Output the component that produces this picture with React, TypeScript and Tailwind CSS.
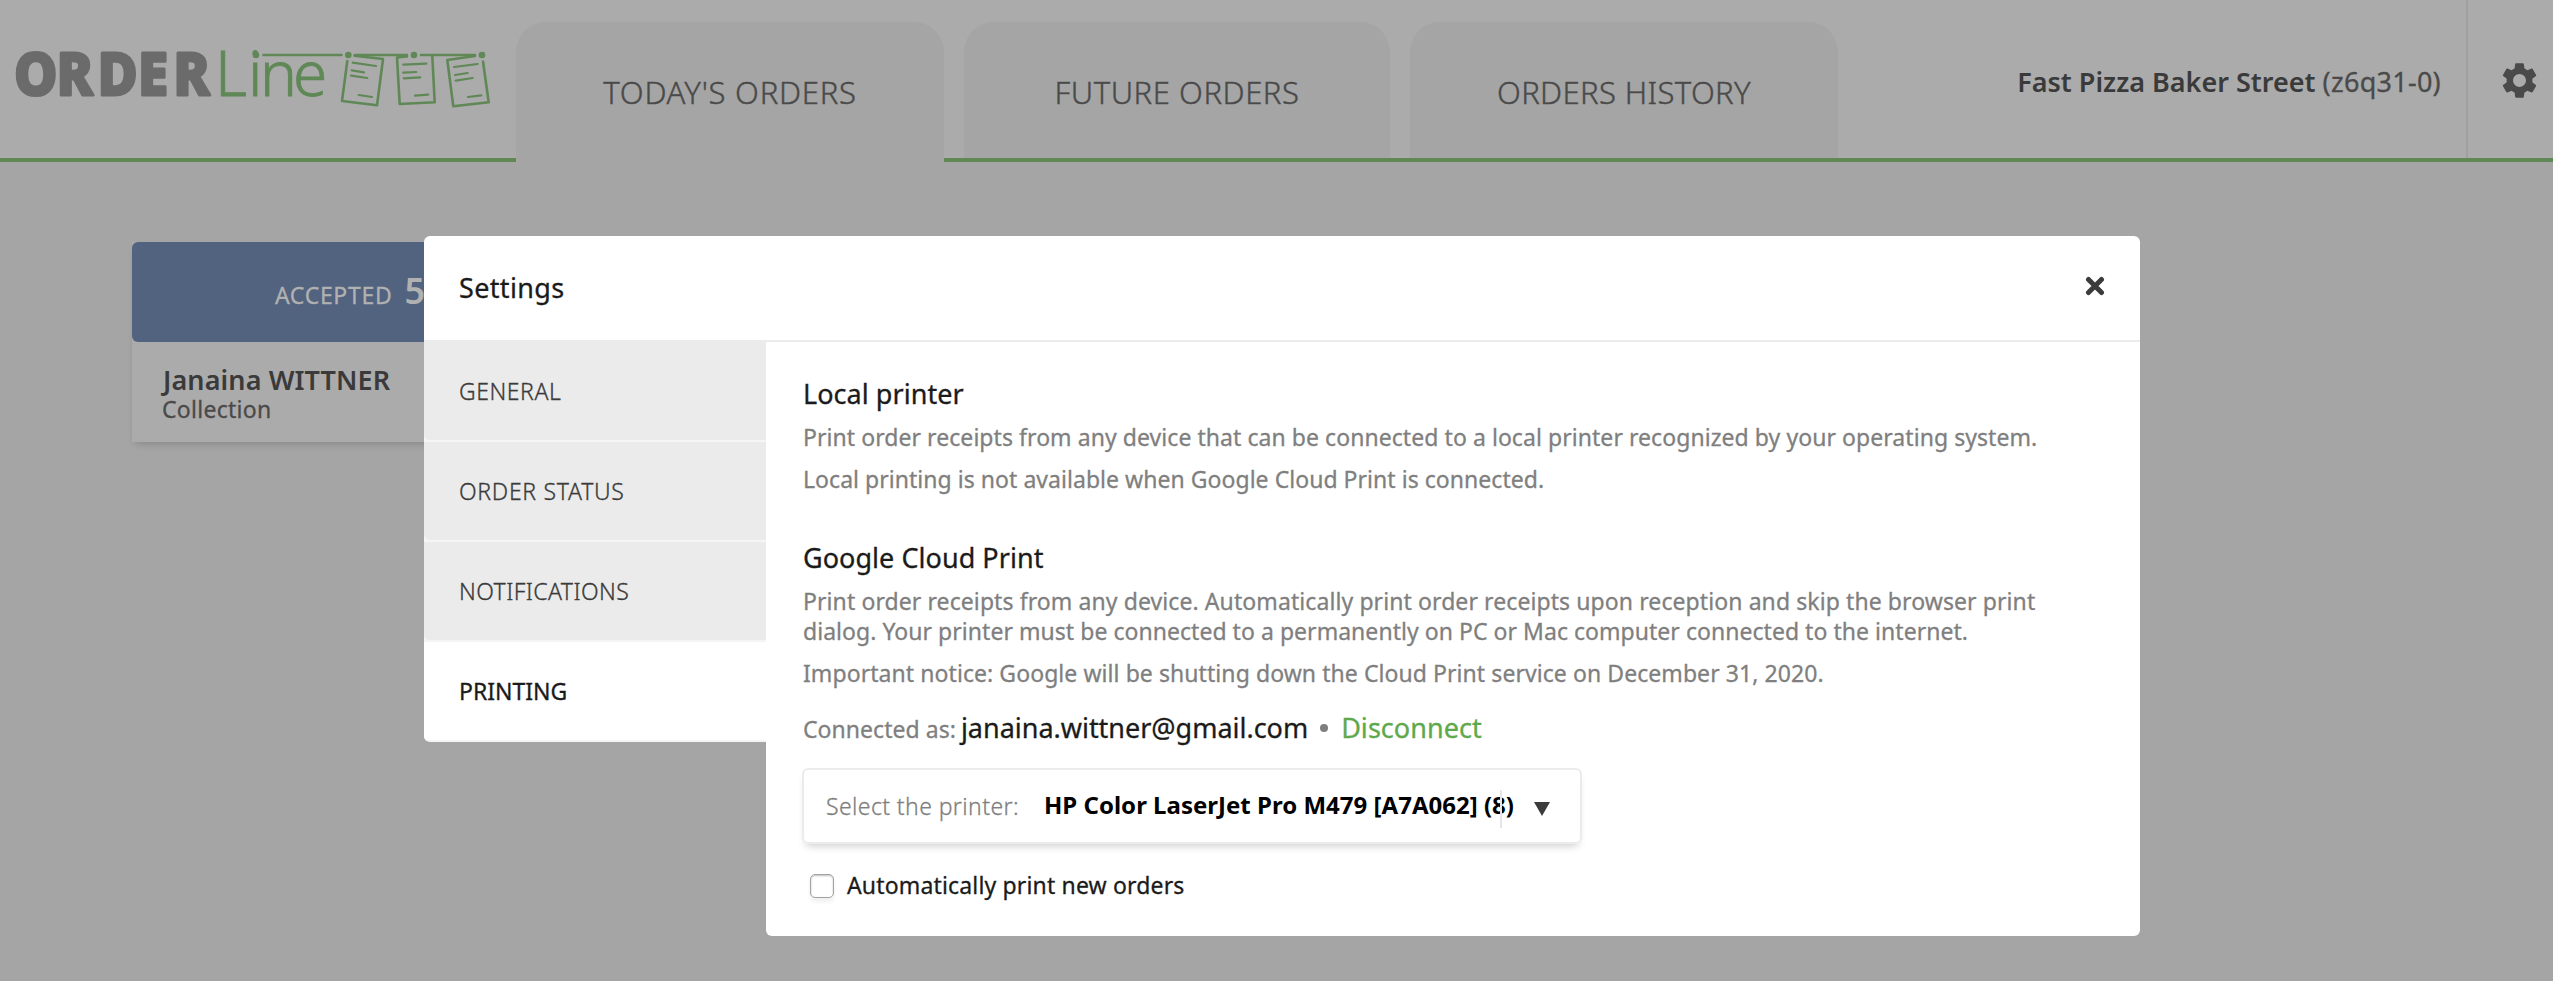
import type { ReactNode } from 'react';
import { MdSettings } from 'react-icons/md';

function Logo() {
  return (
    <svg width="516" height="158" viewBox="0 0 516 158" className="shrink-0" role="img" aria-label="OrderLine">
      <text
        y="95.5"
        x="15.6 61.6 106.4 150 188.6"
        fontSize="59"
        fontWeight="800"
        fill="#6b6b6b"
        stroke="#6b6b6b"
        strokeWidth="3"
        strokeLinejoin="round"
        transform="scale(0.92 1)"
      >
        ORDER
      </text>
      <text y="96" x="215 248 260 293" fontSize="62" fontWeight="300" fill="#5f8856" stroke="#5f8856" strokeWidth="0.8">
        Line
      </text>
      <g fill="#5f8856">
        <circle cx="256" cy="55" r="3.3" />
        <circle cx="348.3" cy="55" r="3.3" />
        <circle cx="414" cy="55" r="3.3" />
        <circle cx="482" cy="55" r="3.3" />
      </g>
      <g fill="none" stroke="#5f8856" strokeWidth="2.6" strokeLinecap="round" strokeLinejoin="round">
        <path d="M263.5 55H341.5M355 55H407M421 55H475" />
        <path d="M347.3 61L342 101L377 105.3L383 59L354.5 55.7" />
        <path d="M407 56.5L397 57.5L399.7 104L434.7 102.3L432.3 56" />
        <path d="M475 56L447.3 60L453.3 106.3L488.7 102.3L483 61.5" />
        <path d="M352.7 62.7L376 66M351.7 70.3L364 72.3M351 75.7L367.3 78M358.7 95L372 97" strokeWidth="2.2" />
        <path d="M403.3 64.7L426.3 63.7M403.3 72.7L416.3 72M403.7 78.3L420.3 77.3M415 95.7L428.3 94.7" strokeWidth="2.2" />
        <path d="M454 67L477.7 64M455 75L467.7 73M455.7 80.7L472.7 78M468 97L481.3 95.3" strokeWidth="2.2" />
      </g>
    </svg>
  );
}

function Header() {
  const tab =
    'flex items-center justify-center rounded-t-[30px] bg-[#a5a5a5] pt-1 text-[31px] font-light whitespace-nowrap text-[#4a4a4a] [-webkit-text-stroke:0.4px]';
  return (
    <header className="flex h-[162px] border-b-4 border-[#5f8856] bg-[#ababab]">
      <Logo />
      <nav className="flex gap-5 pt-[22px]">
        <button className={`${tab} relative -mb-1 w-[428px] pb-1 tracking-[0.75px]`}>TODAY'S ORDERS</button>
        <button className={`${tab} w-[426px] tracking-[0.55px]`}>FUTURE ORDERS</button>
        <button className={`${tab} w-[428px] tracking-[0.35px]`}>ORDERS HISTORY</button>
      </nav>
      <div className="ml-auto flex items-center border-r-2 border-[#a0a0a0] pt-[7px] pr-[25px] text-[27px] whitespace-nowrap text-[#4a4a4a]">
        <p>
          <span className="font-semibold text-[#3a3a3a]">Fast Pizza Baker Street</span>{' '}
          <span className="tracking-[0.27px] [-webkit-text-stroke:0.3px]">(z6q31-0)</span>
        </p>
      </div>
      <button className="flex w-[85px] items-center pt-0.5 pl-[30px] text-[#4a4a4a]" aria-label="Settings">
        <MdSettings size={43} />
      </button>
    </header>
  );
}

function Board() {
  return (
    <main className="pt-20 pl-[132px]">
      <section className="w-[434px] bg-[#ababab] shadow-[0_5px_8px_-4px_rgba(0,0,0,0.22)]">
        <h2 className="flex h-[100px] items-baseline justify-center gap-[12px] rounded-[6px] bg-[#52637f] pt-[31px] pl-[2px] text-[#b1b1b1]">
          <span className="text-[23px] tracking-[0.7px] [-webkit-text-stroke:0.3px]">ACCEPTED</span>
          <span className="text-[36px] leading-9 font-semibold">5</span>
        </h2>
        <div className="h-[100px] pt-[22px] pl-[30px]">
          <p className="ml-px text-[27px] leading-8 font-semibold tracking-[0.1px] text-[#3a3a3a]">Janaina WITTNER</p>
          <p className="-mt-px text-[23px] leading-7 tracking-[0.28px] text-[#4a4a4a] [-webkit-text-stroke:0.3px]">
            Collection
          </p>
        </div>
      </section>
    </main>
  );
}

function MenuItem({ children, className }: { children: ReactNode; className: string }) {
  return (
    <li className="h-[100px] bg-[#f5f5f5]">
      <button className="flex h-[98px] w-full items-center rounded-bl-[6px] bg-[#ebebeb] pl-[35px] text-[23px] font-light text-[#3b3b3b] [-webkit-text-stroke:0.3px]">
        <span className={className}>{children}</span>
      </button>
    </li>
  );
}

function Settings() {
  return (
    <div className="absolute top-[236px] left-[424px] w-[1716px]" role="dialog">
      <div className="flex h-[106px] items-center justify-between rounded-t-[6px] border-b-2 border-[#ebebeb] bg-white pr-[35px] pl-[35px]">
        <h1 className="text-[27px] tracking-[0.35px] text-[#1b1b1b] [-webkit-text-stroke:0.3px]">Settings</h1>
        <svg width="20" height="20" viewBox="0 0 20 20" className="mb-1">
          <path d="M3.5 3.5L16.5 16.5M16.5 3.5L3.5 16.5" stroke="#3b3b3b" strokeWidth="5" strokeLinecap="round" />
        </svg>
      </div>
      <div className="flex items-start">
        <ul className="w-[342px] shrink-0 overflow-hidden rounded-bl-[6px]">
          <MenuItem className="tracking-[0.56px]">GENERAL</MenuItem>
          <MenuItem className="tracking-[0.7px]">ORDER STATUS</MenuItem>
          <MenuItem className="tracking-[0.4px]">NOTIFICATIONS</MenuItem>
          <li className="h-[100px] bg-[#f5f5f5]">
            <button className="flex h-[98px] w-full items-center bg-white pl-[35px] text-[23px] text-[#1b1b1b] [-webkit-text-stroke:0.3px]">
              PRINTING
            </button>
          </li>
        </ul>
        <div className="h-[594px] w-[1374px] rounded-b-[6px] bg-white pt-[35px] pl-[37px] text-[23px] leading-[30px] tracking-[0.04px] whitespace-nowrap text-[#7f7f7f] [-webkit-text-stroke:0.3px]">
          <h2 className="text-[27px] leading-[34px] text-[#1b1b1b]">Local printer</h2>
          <p className="mt-[11px] tracking-[0.06px]">
            Print order receipts from any device that can be connected to a local printer recognized by your operating system.
          </p>
          <p className="mt-3">Local printing is not available when Google Cloud Print is connected.</p>
          <h2 className="mt-[47px] text-[27px] leading-[34px] text-[#1b1b1b]">Google Cloud Print</h2>
          <p className="mt-[11px]">
            <span className="tracking-[0.09px]">
              Print order receipts from any device. Automatically print order receipts upon reception and skip the browser print
            </span>
            <br />
            dialog. Your printer must be connected to a permanently on PC or Mac computer connected to the internet.
          </p>
          <p className="mt-3 tracking-[0.07px]">
            Important notice: Google will be shutting down the Cloud Print service on December 31, 2020.
          </p>
          <div className="mt-[23px] flex h-[34px] items-baseline leading-[34px]">
            <span>Connected as:</span>
            <span className="ml-[5px] text-[27px] tracking-[-0.02px] text-[#1b1b1b]">janaina.wittner@gmail.com</span>
            <span className="mr-[13px] ml-[12px] size-2 -translate-y-[6px] rounded-full bg-[#7f7f7f]" />
            <a className="text-[27px] tracking-[0.04px] text-[#5ea94b]">Disconnect</a>
          </div>
          <div className="relative mt-[23px] -ml-px flex h-[76px] w-[780px] items-center rounded-[6px] border-2 border-[#ebebeb] pl-[22px] shadow-[0_6px_8px_-4px_rgba(0,0,0,0.2)]">
            <span className="w-[218px] font-light tracking-[0.4px]">Select the printer:</span>
            <span className="mb-0.5 text-[24px] font-bold tracking-[0.01px] text-black [-webkit-text-stroke:0px]">
              HP Color LaserJet Pro M479 [A7A062] (8)
            </span>
            <span className="absolute top-5 left-[696px] h-[38px] w-0.5 bg-[#e6e6e6]" />
            <svg width="16" height="14" viewBox="0 0 16 14" className="mt-1.5 mr-[30px] ml-auto">
              <path d="M0 0H16L8 14Z" fill="#3b3b3b" />
            </svg>
          </div>
          <label className="mt-[26px] flex items-center pl-[7px] text-[#1b1b1b]">
            <span className="mt-0.5 mr-[13px] size-6 rounded-[5px] border border-[#a3a3a3] bg-white shadow-[inset_0_1px_2px_rgba(0,0,0,0.25),0_4px_4px_rgba(0,0,0,0.06)]" />
            <span className="tracking-[0.16px]">Automatically print new orders</span>
          </label>
        </div>
      </div>
    </div>
  );
}

export default function App() {
  return (
    <div className="relative h-[981px] w-[2553px] overflow-hidden bg-[#a5a5a5] font-['Noto_Sans','Open_Sans',sans-serif]">
      <Header />
      <Board />
      <Settings />
    </div>
  );
}
